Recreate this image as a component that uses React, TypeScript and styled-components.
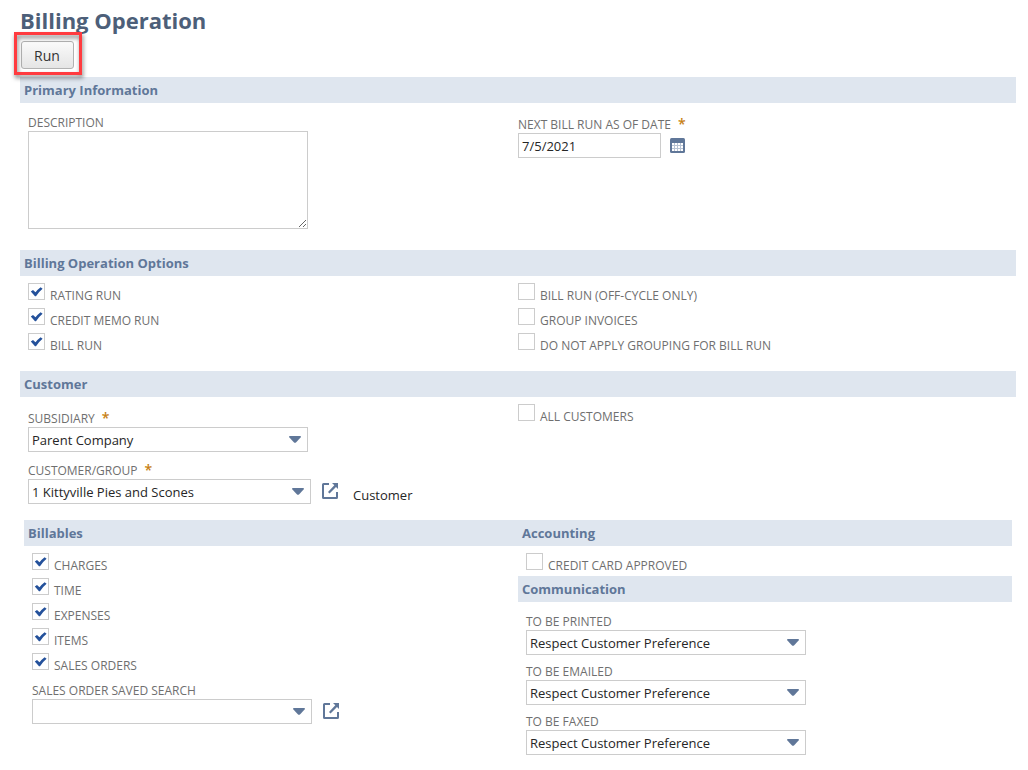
import React, { useId } from "react";
import styled, { createGlobalStyle } from "styled-components";

const colors = {
  title: "#4d5f79",
  heading: "#607799",
  bar: "#dfe6ef",
  label: "#6f6f6f",
  text: "#262626",
  border: "#cccccc",
  check: "#24519b",
  required: "#c77f13",
  highlight: "#ff3b3f",
};

const GlobalStyle = createGlobalStyle`
  *, *::before, *::after { box-sizing: border-box; }
  body {
    margin: 0;
    background: #fff;
    color: ${colors.text};
    font-family: "Open Sans", "Liberation Sans", sans-serif;
    font-size: 13px;
  }
  button, input, select, textarea { font: inherit; color: inherit; }
`;

const Page = styled.main`
  padding: 5px 12px 14px 20px;
`;

const Title = styled.h1`
  margin: 0;
  color: ${colors.title};
  font-size: 22px;
  font-weight: 700;
  line-height: 30px;
`;

const Toolbar = styled.div`
  display: flex;
  padding: 6px 1px 8px;
`;

const Highlight = styled.div`
  position: relative;
  display: flex;
  &::after {
    content: "";
    position: absolute;
    inset: -9px -8px -6px -7px;
    border: 3px solid ${colors.highlight};
    filter: drop-shadow(1px 3px 2px rgba(0, 0, 0, 0.5));
    pointer-events: none;
  }
`;

const RunButton = styled.button`
  height: 28px;
  padding: 2px 13px 0 12px;
  border: 1px solid #b2b2b2;
  border-radius: 3px;
  background: linear-gradient(#fafafa, #e5e5e5);
  color: #333;
  font-size: 14px;
  font-weight: 500;
  line-height: 24px;
`;

const Bar = styled.h2`
  margin: 0;
  padding: 0 4px;
  background: ${colors.bar};
  color: ${colors.heading};
  font-size: 13px;
  font-weight: 700;
  line-height: 26px;
`;

const Columns = styled.div<{ $bottom: number }>`
  display: grid;
  grid-template-columns: 1fr 1fr;
  padding: 0 8px ${(p) => p.$bottom}px;
`;

const Panels = styled.div`
  display: grid;
  grid-template-columns: 1fr 1fr;
  padding: 0 4px;
`;

const PanelBody = styled.div`
  padding: 0 8px;
`;

const Fields = styled.div<{ $top?: number }>`
  display: flex;
  flex-direction: column;
  gap: 7px;
  padding-top: ${(p) => p.$top ?? 10}px;
`;

const Checks = styled.div`
  display: flex;
  flex-direction: column;
  gap: 2px;
  padding-top: 7px;
`;

const CheckLabel = styled.label`
  display: flex;
  gap: 5px;
  height: 23px;
  color: ${colors.label};
  font-size: 12px;
  line-height: 16px;
`;

const CheckText = styled.span`
  padding-top: 5px;
`;

const CheckBox = styled.span`
  display: grid;
  width: 17px;
  height: 17px;
  & > * { grid-area: 1 / 1; }
  input {
    appearance: none;
    width: 17px;
    height: 17px;
    margin: 0;
    border: 1px solid ${colors.border};
    background: #fff;
  }
  svg { visibility: hidden; pointer-events: none; }
  input:checked + svg { visibility: visible; }
`;

const FieldLabel = styled.label<{ $required?: boolean }>`
  display: block;
  padding-top: ${(p) => (p.$required ? 3 : 1)}px;
  color: ${colors.label};
  font-size: 12px;
  line-height: 17px;
`;

const Star = styled.span`
  margin-left: 7px;
  color: ${colors.required};
  font-size: 14px;
  font-weight: 600;
  line-height: 0;
`;

const Row = styled.div`
  display: flex;
  align-items: center;
`;

const TextArea = styled.textarea`
  display: block;
  width: 280px;
  height: 98px;
  padding: 3px;
  border: 1px solid ${colors.border};
  resize: both;
`;

const DateInput = styled.input`
  width: 143px;
  height: 25px;
  padding: 0 3px;
  border: 1px solid ${colors.border};
`;

const SelectBox = styled.span<{ $width: number }>`
  display: grid;
  align-items: center;
  width: ${(p) => p.$width}px;
  & > * { grid-area: 1 / 1; }
  svg {
    justify-self: end;
    margin-right: 7px;
    pointer-events: none;
  }
`;

const Select = styled.select`
  appearance: none;
  width: 100%;
  height: 25px;
  padding: 0 24px 0 3px;
  border: 1px solid ${colors.border};
  border-radius: 0;
  background: #fff;
`;

const IconButton = styled.button<{ $gap: number }>`
  display: flex;
  margin: 0 0 0 ${(p) => p.$gap}px;
  padding: 0;
  border: 0;
  background: none;
`;

const Note = styled.span`
  margin-left: 14px;
  padding-top: 6px;
  line-height: 18px;
`;

const CheckMark = () => (
  <svg width="17" height="17" viewBox="0 0 17 17" aria-hidden="true">
    <path d="M2.800 8.600 5 6.900 7.500 9.300Q9.500 6.500 12.600 4.200L14.600 5.800Q10.500 9.200 8 13.200H7Z" fill={colors.check} />
  </svg>
);

const Arrow = () => (
  <svg width="12" height="7" viewBox="0 0 12 7" aria-hidden="true">
    <path d="M1 0h10q1.600.3.600 1.500L7.200 6.300q-1.200 1-2.400 0L.4 1.500Q-.6.3 1 0Z" fill={colors.heading} />
  </svg>
);

const OpenIcon = () => (
  <svg width="17" height="17" viewBox="0 0 17 17" aria-hidden="true">
    <path d="M7 1H1.500Q1 1 1 1.500V14.500Q1 15 1.500 15H14.500Q15 15 15 14.500V9" fill="none" stroke={colors.heading} strokeWidth="2" />
    <path d="M10 0H16V6L14 4 7.500 10.500 6 9 12.300 2.300Z" fill={colors.heading} />
  </svg>
);

const CalendarIcon = () => (
  <svg width="15" height="15" viewBox="0 0 15 15" aria-hidden="true">
    <rect width="15" height="15" rx="1.500" fill={colors.heading} />
    <path d="M2 5h11v8H2z" fill="#fff" />
    <path d="M4.500 5v8M7.500 5v8M10.500 5v8M2 7.500h11M2 10.500h11" stroke="#b9c4d4" />
  </svg>
);

function Check({ label, checked = false }: { label: string; checked?: boolean }) {
  return (
    <CheckLabel>
      <CheckBox>
        <input type="checkbox" defaultChecked={checked} />
        <CheckMark />
      </CheckBox>
      <CheckText>{label}</CheckText>
    </CheckLabel>
  );
}

function Label({ id, text, required }: { id: string; text: string; required?: boolean }) {
  return (
    <FieldLabel htmlFor={id} $required={required}>
      {text}
      {required && <Star>*</Star>}
    </FieldLabel>
  );
}

type SelectFieldProps = {
  label: string;
  value: string;
  required?: boolean;
  width?: number;
  children?: React.ReactNode;
};

function SelectField({ label, value, required, width = 280, children }: SelectFieldProps) {
  const id = useId();
  return (
    <div>
      <Label id={id} text={label} required={required} />
      <Row>
        <SelectBox $width={width}>
          <Select id={id} defaultValue={value}>
            <option value={value}>{value}</option>
          </Select>
          <Arrow />
        </SelectBox>
        {children}
      </Row>
    </div>
  );
}

export default function App() {
  return (
    <>
      <GlobalStyle />
      <Page>
        <Title>Billing Operation</Title>
        <Toolbar>
          <Highlight>
            <RunButton type="button">Run</RunButton>
          </Highlight>
        </Toolbar>

        <section>
          <Bar>Primary Information</Bar>
          <Columns $bottom={21}>
            <Fields>
              <div>
                <Label id="description" text="DESCRIPTION" />
                <TextArea id="description" />
              </div>
            </Fields>
            <Fields>
              <div>
                <Label id="next-date" text="NEXT BILL RUN AS OF DATE" required />
                <Row>
                  <DateInput id="next-date" type="text" defaultValue="7/5/2021" />
                  <IconButton type="button" aria-label="Pick a date" $gap={9}>
                    <CalendarIcon />
                  </IconButton>
                </Row>
              </div>
            </Fields>
          </Columns>
        </section>

        <section>
          <Bar>Billing Operation Options</Bar>
          <Columns $bottom={15}>
            <Checks>
              <Check label="RATING RUN" checked />
              <Check label="CREDIT MEMO RUN" checked />
              <Check label="BILL RUN" checked />
            </Checks>
            <Checks>
              <Check label="BILL RUN (OFF-CYCLE ONLY)" />
              <Check label="GROUP INVOICES" />
              <Check label="DO NOT APPLY GROUPING FOR BILL RUN" />
            </Checks>
          </Columns>
        </section>

        <section>
          <Bar>Customer</Bar>
          <Columns $bottom={16}>
            <Fields>
              <SelectField label="SUBSIDIARY" value="Parent Company" required />
              <SelectField label="CUSTOMER/GROUP" value="1 Kittyville Pies and Scones" required width={283}>
                <IconButton type="button" aria-label="Open customer" $gap={11}>
                  <OpenIcon />
                </IconButton>
                <Note>Customer</Note>
              </SelectField>
            </Fields>
            <Checks>
              <Check label="ALL CUSTOMERS" />
            </Checks>
          </Columns>
        </section>

        <Panels>
          <section>
            <Bar>Billables</Bar>
            <PanelBody>
              <Checks>
                <Check label="CHARGES" checked />
                <Check label="TIME" checked />
                <Check label="EXPENSES" checked />
                <Check label="ITEMS" checked />
                <Check label="SALES ORDERS" checked />
              </Checks>
              <Fields $top={5}>
                <SelectField label="SALES ORDER SAVED SEARCH" value="">
                  <IconButton type="button" aria-label="Open saved search" $gap={11}>
                    <OpenIcon />
                  </IconButton>
                </SelectField>
              </Fields>
            </PanelBody>
          </section>
          <div>
            <section>
              <Bar>Accounting</Bar>
              <PanelBody>
                <Checks>
                  <Check label="CREDIT CARD APPROVED" />
                </Checks>
              </PanelBody>
            </section>
            <section>
              <Bar>Communication</Bar>
              <PanelBody>
                <Fields>
                  <SelectField label="TO BE PRINTED" value="Respect Customer Preference" />
                  <SelectField label="TO BE EMAILED" value="Respect Customer Preference" />
                  <SelectField label="TO BE FAXED" value="Respect Customer Preference" />
                </Fields>
              </PanelBody>
            </section>
          </div>
        </Panels>
      </Page>
    </>
  );
}
